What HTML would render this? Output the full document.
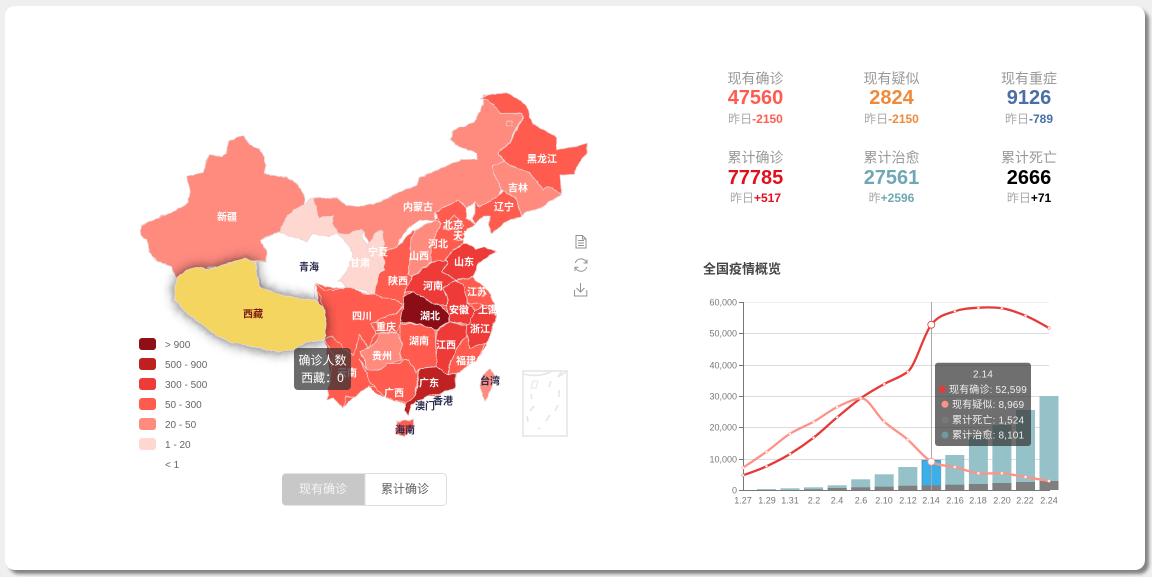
<!DOCTYPE html>
<html>
<head>
<meta charset="utf-8">
<style>
html,body{margin:0;padding:0;width:1152px;height:577px;overflow:hidden;background:#efefef;font-family:"Liberation Sans","Noto Sans CJK SC",sans-serif}
#card{position:absolute;left:5px;top:6px;width:1140px;height:564px;background:#fff;border-radius:10px;box-shadow:4px 4px 3px rgba(0,0,0,.45)}
svg{position:absolute;left:0;top:0}
text{font-family:"Liberation Sans","Noto Sans CJK SC",sans-serif;transform:translateY(1px)}
.A{fill:#ff8a7e}.B{fill:#ff5c4f}.C{fill:#ee3a38}.D{fill:#be2020}.E{fill:#8b1014}.P{fill:#ffd7d1}
.prov polygon{stroke:#e9d5d3;stroke-linejoin:round}
.l text{font-size:10px;font-weight:bold;fill:#fff;text-anchor:middle;dominant-baseline:central;transform:translateY(2px)}
.l text.d{fill:#2d2d50}
.lg{font-size:10px;fill:#666;dominant-baseline:central;transform:translateY(2px)}
.st{text-anchor:middle;dominant-baseline:central}
text.st{transform:translateY(1.7px)}
.lb{font-size:14px;fill:#999}
.n{font-size:20px;font-weight:bold}
.s{font-size:12px;fill:#aaa}
.s tspan{font-weight:bold}
.ty{font-size:9px;fill:#777;text-anchor:end;dominant-baseline:central}
.tx{font-size:9px;fill:#777;text-anchor:middle;dominant-baseline:central}
.tt{font-size:10px;fill:#eee;dominant-baseline:central;letter-spacing:.15px;transform:translateY(2px)}
</style>
</head>
<body>
<div id="card"></div>
<svg width="1152" height="577" viewBox="0 0 1152 577">
<defs>
<filter id="sh" x="-25%" y="-40%" width="150%" height="180%"><feDropShadow dx="0" dy="0" stdDeviation="6" flood-color="#000" flood-opacity=".65"/></filter>
<filter id="rag" filterUnits="userSpaceOnUse" x="100" y="70" width="520" height="390">
<feTurbulence type="fractalNoise" baseFrequency=".14" numOctaves="2" seed="4" result="n"/>
<feDisplacementMap in="SourceGraphic" in2="n" scale="3.5" xChannelSelector="R" yChannelSelector="G" result="d"/>
<feGaussianBlur in="d" stdDeviation=".25"/>
</filter>
</defs>

<!-- MAP -->
<g class="prov" stroke-width=".8" filter="url(#rag)">
<!-- Inner Mongolia -->
<polygon class="A" points="313,198 337,198 347,205 360,207 380,202 403,190 418,185 420,177 437,170 460,160 477,160 477,153 460,147 450,140 453,130 473,123 483,105 483,95 488,96 500,113 522,113 523,118 513,133 510,143 498,152 503,162 492,167 497,180 503,187 497,197 478,207 475,202 467,208 458,200 435,212 435,220 420,220 403,233 397,247 385,255 370,248 362,229 347,235 338,233 332,223 333,216 320,218 315,205"/>
<!-- underlay to close gaps -->
<polygon class="B" style="stroke:none" points="316,284 348,288 375,296 377,280 397,247 415,231 435,220 458,201 467,209 467,218 475,223 464,233 463,243 475,250 478,263 473,277 482,285 494,305 497,317 487,343 477,360 457,373 455,388 433,397 412,397 407,405 380,396 365,385 343,408 333,398 327,400 331,380 325,340"/>
<!-- Gansu -->
<polygon class="P" points="279,232 282,218 290,210 303,205 312,198 315,205 320,218 333,216 332,223 338,233 347,235 362,229 363,240 370,248 385,255 382,262 385,270 380,273 377,280 375,296 365,291 350,287 338,281 340,280 347,270 353,255 350,247 337,233 327,237 312,233 307,242"/>
<!-- Qinghai -->
<polygon fill="#fff" points="279,232 307,242 312,233 327,237 337,233 350,247 353,255 347,270 340,280 338,281 348,287 335,288 325,286 315,283 315,300 290,298 262,288 257,262 266,262 267,252 260,240"/>
<!-- Shaanxi -->
<polygon class="B" points="397,247 413,230 418,230 410,247 412,253 408,275 412,277 405,292 403,305 395,300 375,295 377,280 380,273 385,270 382,253"/>
<!-- Henan -->
<polygon class="C" points="412,277 432,262 445,260 447,263 442,272 457,280 443,288 448,300 447,305 440,305 433,303 413,292 405,292"/>
<!-- Jiangsu -->
<polygon class="B" points="457,280 473,277 482,285 490,293 494,305 485,305 468,303 463,285 455,282"/>
<!-- transformed crop-2 -->
<g transform="translate(360 90) scale(.33333)" stroke-width="2.400">
<polygon class="B" points="390,15 440,8 480,30 500,50 520,105 590,140 590,180 680,160 680,190 650,230 645,250 600,255 605,310 560,290 550,300 510,250 435,220 425,205 415,185 450,160 465,125 490,85 485,70 450,70 420,70 385,30 360,25"/>
<polygon class="A" points="440,95 455,93 457,108 440,108"/>
<polygon class="A" points="395,230 430,215 510,250 550,300 560,290 605,310 600,320 575,330 550,350 500,365 485,378 465,320 430,305 410,270"/>
<polygon class="B" points="345,335 355,350 405,325 430,305 465,320 485,378 440,395 395,430 385,405 390,380 370,380 345,400 335,385 345,365"/>
<polygon class="B" points="225,365 295,330 320,355 320,385 345,400 312,428 310,458 280,480 255,510 215,515 213,470 240,400"/>
<polygon class="B" points="265,395 280,375 300,390 310,410 285,420 250,415"/>
<polygon class="B" points="295,420 315,430 310,450 290,452"/>
<polygon class="A" points="165,420 225,390 240,400 213,470 215,515 155,560 145,555 155,490 150,460"/>
<polygon class="C" points="255,510 280,480 310,460 335,465 345,478 375,470 410,485 355,520 340,560 290,570 245,545 262,520"/>
<polygon class="P" points="45,430 65,420 72,460 65,490 75,520 60,540 55,515 30,500 20,470"/>
</g>
<!-- transformed crop-3 -->
<g transform="translate(300 280) scale(.33333)" stroke-width="2.400">
<polygon class="B" points="45,10 75,30 100,30 145,20 190,40 225,45 285,60 310,75 285,100 250,115 215,130 225,160 205,205 180,165 160,225 130,205 95,165 75,180 78,130 70,80"/>
<polygon class="B" points="75,180 95,165 130,205 160,225 180,165 205,205 180,215 195,240 200,270 205,300 225,320 205,320 165,350 135,350 130,385 100,355 80,360 90,300 100,230"/>
<polygon class="C" points="465,0 490,15 505,70 525,90 505,135 450,125 440,75 445,60 430,25"/>
<polygon class="C" points="525,90 555,75 590,110 560,190 510,205 495,140 505,135"/>
<polygon class="B" points="565,75 585,85 590,105 570,100"/>
<polygon class="B" points="495,140 500,165 510,205 555,190 530,240 470,280 445,285 450,250 470,205 500,165"/>
<polygon class="C" points="410,150 450,125 500,140 500,165 470,205 450,250 445,285 410,270 405,230"/>
<polygon class="B" points="300,135 360,130 405,150 410,260 360,265 350,280 325,240 305,240 300,190"/>
<polygon class="E" points="310,80 310,50 340,35 400,70 420,75 445,100 445,125 405,150 360,130 300,130 290,110"/>
<polygon class="B" points="285,100 310,80 300,130 300,135 290,155 240,157 225,160 215,130 250,115"/>
<polygon class="B" points="180,235 200,270 235,270 265,250 300,250 310,240 325,240 350,280 360,270 350,310 345,345 320,370 250,350 225,320 205,300"/>
<polygon class="A" points="205,205 225,190 240,160 290,157 305,190 300,240 265,250 235,270 200,270 195,240 180,215"/>
<polygon class="D" points="360,265 410,260 445,285 470,280 465,325 420,340 380,350 335,375 325,408 312,390 320,370 345,345 355,300"/>
<polygon class="A" points="570,265 582,285 577,320 555,365 540,320 548,285"/>
<polygon class="B" points="290,425 340,418 342,445 310,472 290,460"/>
</g>
<!-- Xinjiang -->
<g transform="translate(130 90) scale(.33333)" stroke-width="2.400">
<polygon class="A" points="325,140 340,138 360,165 390,178 405,205 408,225 402,250 470,262 505,285 525,322 520,345 490,360 470,385 447,425 390,450 412,485 408,515 370,510 345,508 300,518 265,530 235,530 215,545 170,540 140,565 125,530 85,515 60,490 50,450 30,435 35,405 70,390 100,375 120,370 175,340 180,310 170,260 220,248 235,195 275,200 290,190 295,155"/>
</g>
<!-- Tibet -->
<polygon fill="#f4d55f" stroke="#f2efe0" filter="url(#sh)" points="177,278 187,270 202,267 208,270 218,267 230,263 245,259 256,262 256,272 260,287 280,295 295,298 315,300 323,307 326,323 325,340 320,341 307,342 293,350 277,352 253,347 230,342 213,333 197,320 185,312 175,300 175,285"/>
</g>

<!-- South China Sea box -->
<g fill="none" stroke="#e6e6e6" stroke-width="1.600">
<rect x="523" y="371" width="44" height="65"/>
<path d="M523 374Q540 378 552 371M562 371L558 377L566 372"/>
<path d="M533 381L531 388L536 388L538 381Z" stroke-width="1"/>
<path d="M531 394L532 399M534 406L530 411M527 416L528 422M551 381L549 387M559 390L559 397M558 405L555 411M550 415L546 421M540 428L538 429"/>
</g>

<!-- Map labels -->
<g class="l">
<text x="227" y="216">新疆</text>
<text x="309" y="266" class="d">青海</text>
<text x="253" y="313" style="fill:#7a1a10">西藏</text>
<text x="360" y="262">甘肃</text>
<text x="378" y="251">宁夏</text>
<text x="418" y="206">内蒙古</text>
<text x="542" y="158">黑龙江</text>
<text x="518" y="187">吉林</text>
<text x="504" y="206">辽宁</text>
<text x="453" y="224">北京</text>
<text x="463" y="235">天津</text>
<text x="438" y="243">河北</text>
<text x="419" y="255">山西</text>
<text x="464" y="261">山东</text>
<text x="398" y="280">陕西</text>
<text x="433" y="285">河南</text>
<text x="477" y="291">江苏</text>
<text x="459" y="309">安徽</text>
<text x="488" y="309">上海</text>
<text x="430" y="315">湖北</text>
<text x="362" y="315">四川</text>
<text x="386" y="326">重庆</text>
<text x="480" y="328">浙江</text>
<text x="419" y="340">湖南</text>
<text x="446" y="344">江西</text>
<text x="382" y="355">贵州</text>
<text x="466" y="360">福建</text>
<text x="347" y="372">云南</text>
<text x="429" y="382">广东</text>
<text x="394" y="392">广西</text>
<text x="490" y="380" class="d">台湾</text>
<text x="443" y="400" class="d">香港</text>
<text x="425" y="405" class="d">澳门</text>
<text x="405" y="429" class="d">海南</text>
</g>

<!-- Map tooltip -->
<rect x="294" y="348" width="57" height="42" rx="4" fill="rgba(50,50,50,.72)"/>
<text x="322.500" y="359.500" font-size="12" fill="#fff" text-anchor="middle" dominant-baseline="central">确诊人数</text>
<text x="322.500" y="377" font-size="12" fill="#fff" text-anchor="middle" dominant-baseline="central">西藏：0</text>

<!-- Legend -->
<g>
<rect x="139" y="338" width="17" height="12" rx="3" fill="#8f1014"/>
<rect x="139" y="358" width="17" height="12" rx="3" fill="#be2020"/>
<rect x="139" y="378" width="17" height="12" rx="3" fill="#ee3a38"/>
<rect x="139" y="398" width="17" height="12" rx="3" fill="#ff5c4f"/>
<rect x="139" y="418" width="17" height="12" rx="3" fill="#ff8a7e"/>
<rect x="139" y="438" width="17" height="12" rx="3" fill="#ffd7d1"/>
<text class="lg" x="165" y="343.500">&gt; 900</text>
<text class="lg" x="165" y="363.500">500 - 900</text>
<text class="lg" x="165" y="383.500">300 - 500</text>
<text class="lg" x="165" y="403.500">50 - 300</text>
<text class="lg" x="165" y="423.500">20 - 50</text>
<text class="lg" x="165" y="443.500">1 - 20</text>
<text class="lg" x="165" y="463.500">&lt; 1</text>
</g>

<!-- Toggle buttons -->
<path d="M286 473.500H365V505.500H286a4 4 0 0 1-4-4V477.500a4 4 0 0 1 4-4Z" fill="#c8c8c8"/>
<path d="M365 473.500H442.500a4 4 0 0 1 4 4V501.500a4 4 0 0 1-4 4H365Z" fill="#fff" stroke="#dcdfe6"/>
<text x="323" y="488" font-size="12" fill="#f4f4f4" text-anchor="middle" dominant-baseline="central">现有确诊</text>
<text x="405" y="488" font-size="12" fill="#606266" text-anchor="middle" dominant-baseline="central">累计确诊</text>

<!-- Toolbox icons -->
<g fill="none" stroke="#929292" stroke-width="1">
<path d="M576 235.500H582.500L586 239V248H576Z"/>
<path d="M582.500 235.500V239H586M578 240.500H584M578 243H584M578 245.500H584"/>
<path d="M575.300 263A6 6 0 0 1 586.500 262.500M586.800 267A6 6 0 0 1 575.500 267.500"/>
<path d="M587 259.500V263H583.500M575 271V267.200H578.500"/>
<path d="M580.500 283V292M576.500 288L580.500 292L584.500 288M574.500 290V296H586.800V290" />
</g>

<!-- Stats -->
<g class="st">
<text class="st lb" x="755.500" y="77">现有确诊</text>
<text class="st lb" x="891.500" y="77">现有疑似</text>
<text class="st lb" x="1029" y="77">现有重症</text>
<text class="st n" x="755.500" y="96.500" fill="#ff5c50">47560</text>
<text class="st n" x="891.500" y="96.500" fill="#ee8a3c">2824</text>
<text class="st n" x="1029" y="96.500" fill="#4a6fa5">9126</text>
<text class="st s" x="755.500" y="117.500">昨日<tspan fill="#ff5c50">-2150</tspan></text>
<text class="st s" x="891.500" y="117.500">昨日<tspan fill="#ee8a3c">-2150</tspan></text>
<text class="st s" x="1029" y="117.500">昨日<tspan fill="#4a6fa5">-789</tspan></text>
<text class="st lb" x="755.500" y="156">累计确诊</text>
<text class="st lb" x="891.500" y="156">累计治愈</text>
<text class="st lb" x="1029" y="156">累计死亡</text>
<text class="st n" x="755.500" y="176.500" fill="#e0101c">77785</text>
<text class="st n" x="891.500" y="176.500" fill="#6fa8b2">27561</text>
<text class="st n" x="1029" y="176.500" fill="#000">2666</text>
<text class="st s" x="755.500" y="196.500">昨日<tspan fill="#e0101c">+517</tspan></text>
<text class="st s" x="891.500" y="196.500">昨<tspan fill="#6fa8b2">+2596</tspan></text>
<text class="st s" x="1029" y="196.500">昨日<tspan fill="#000">+71</tspan></text>
</g>

<!-- Chart -->
<text x="703" y="268" font-size="13" font-weight="bold" fill="#464646" dominant-baseline="central">全国疫情概览</text>
<g stroke="#dcdcdc" stroke-width="1">
<path d="M743 302.500H1049" stroke="#eee"/>
<path d="M743 333.500H1049M743 365.500H1049M743 396.500H1049M743 427.500H1049M743 459.500H1049"/>
</g>
<g font-size="9">
<text class="ty" x="737" y="301.500">60,000</text>
<text class="ty" x="737" y="332.500">50,000</text>
<text class="ty" x="737" y="364.500">40,000</text>
<text class="ty" x="737" y="395.500">30,000</text>
<text class="ty" x="737" y="426.500">20,000</text>
<text class="ty" x="737" y="458.500">10,000</text>
<text class="ty" x="737" y="489.500">0</text>
<text class="tx" x="743" y="499.500">1.27</text>
<text class="tx" x="767" y="499.500">1.29</text>
<text class="tx" x="790" y="499.500">1.31</text>
<text class="tx" x="814" y="499.500">2.2</text>
<text class="tx" x="837" y="499.500">2.4</text>
<text class="tx" x="861" y="499.500">2.6</text>
<text class="tx" x="884" y="499.500">2.10</text>
<text class="tx" x="908" y="499.500">2.12</text>
<text class="tx" x="931" y="499.500">2.14</text>
<text class="tx" x="955" y="499.500">2.16</text>
<text class="tx" x="978" y="499.500">2.18</text>
<text class="tx" x="1002" y="499.500">2.20</text>
<text class="tx" x="1025" y="499.500">2.22</text>
<text class="tx" x="1049" y="499.500">2.24</text>
</g>
<!-- Bars -->
<g fill="#94c2c8">
<rect x="757" y="489" width="19" height="1"/>
<rect x="780.500" y="488.300" width="19" height="1.700"/>
<rect x="804" y="487.300" width="19" height="2.700"/>
<rect x="827.700" y="485.300" width="19" height="4.700"/>
<rect x="851.200" y="479.300" width="19" height="10.700"/>
<rect x="874.700" y="474.300" width="19" height="15.700"/>
<rect x="898.300" y="467" width="19" height="23"/>
<rect x="945.300" y="455" width="19" height="35"/>
<rect x="968.900" y="437" width="19" height="53"/>
<rect x="992.400" y="425" width="19" height="65"/>
<rect x="1016" y="410" width="19" height="80"/>
<rect x="1039.500" y="396" width="19" height="94"/>
</g>
<rect x="921.800" y="460" width="19" height="30" fill="#3caee8" stroke="rgba(0,0,0,.12)" stroke-width="1.500"/>
<g fill="#7f7f7f">
<rect x="804" y="489.300" width="19" height=".7"/>
<rect x="827.700" y="488" width="19" height="2"/>
<rect x="851.200" y="487.300" width="19" height="2.700"/>
<rect x="874.700" y="486.700" width="19" height="3.300"/>
<rect x="898.300" y="485.700" width="19" height="4.300"/>
<rect x="921.800" y="485.300" width="19" height="4.700"/>
<rect x="945.300" y="484.700" width="19" height="5.300"/>
<rect x="968.900" y="484" width="19" height="6"/>
<rect x="992.400" y="483" width="19" height="7"/>
<rect x="1016" y="482" width="19" height="8"/>
<rect x="1039.500" y="481" width="19" height="9"/>
</g>
<!-- Axes -->
<path d="M743.500 302V490M739 302.500H743M739 333.500H743M739 365.500H743M739 396.500H743M739 427.500H743M739 459.500H743" stroke="#777" fill="none"/>
<path d="M739 490.500H1050" stroke="#777" fill="none"/>
<!-- Cross line -->
<path d="M931.500 302V490" stroke="#aaa" fill="none"/>
<!-- Lines -->
<path d="M743 475.300C750.850 472.500 758.700 469.900 766.500 466.300S782.200 458.800 790 454S805.700 443.800 813.600 437.700S829.300 423.900 837.200 417.300S852.900 403.900 860.700 398.300S876.400 388.400 884.200 384S900 377.700 907.800 371.700S923.500 334.700 931.300 324.700S947 314.100 954.800 311.300S970.500 308.200 978.400 307.700S994 307 1001.900 308.300S1017.600 312.400 1025.500 315.700S1041 323.500 1049 328" fill="none" stroke="#e53a3a" stroke-width="2.300"/>
<path d="M743 467.700C750.850 462.500 758.700 457.400 766.500 451.700S782.200 438.700 790 433.700S805.700 426.100 813.600 421.700S829.300 410.900 837.200 407S852.900 399.300 860.700 398.300S876.400 414.800 884.200 421.700S900 433 907.800 439.700S923.500 457.200 931.300 461.700S947 465.100 954.800 467S970.500 472.300 978.400 473.300S994 472.700 1001.900 473.300S1017.600 475.700 1025.500 477S1041 479.700 1049 481" fill="none" stroke="#ff9288" stroke-width="2.300"/>
<g fill="#fff" stroke="#f08080" stroke-width=".6">
<circle cx="743" cy="475.300" r="1.300"/><circle cx="766.500" cy="466.300" r="1.300"/><circle cx="790" cy="454" r="1.300"/><circle cx="813.600" cy="437.700" r="1.300"/><circle cx="837.200" cy="417.300" r="1.300"/><circle cx="884.200" cy="384" r="1.300"/><circle cx="907.800" cy="371.700" r="1.300"/><circle cx="954.800" cy="311.300" r="1.300"/><circle cx="978.400" cy="307.700" r="1.300"/><circle cx="1001.900" cy="308.300" r="1.300"/><circle cx="1025.500" cy="315.700" r="1.300"/><circle cx="1049" cy="328" r="1.300"/>
</g>
<circle cx="931.300" cy="324.700" r="3.500" fill="#fff" stroke="#e53a3a" stroke-width=".8"/>
<g fill="#fff" stroke="#ffb0a8" stroke-width=".6">
<circle cx="743" cy="467.700" r="1.300"/><circle cx="766.500" cy="451.700" r="1.300"/><circle cx="790" cy="433.700" r="1.300"/><circle cx="813.600" cy="421.700" r="1.300"/><circle cx="837.200" cy="407" r="1.300"/><circle cx="860.700" cy="398.300" r="1.300"/><circle cx="884.200" cy="421.700" r="1.300"/><circle cx="907.800" cy="439.700" r="1.300"/><circle cx="954.800" cy="467" r="1.300"/><circle cx="978.400" cy="473.300" r="1.300"/><circle cx="1001.900" cy="473.300" r="1.300"/><circle cx="1025.500" cy="477" r="1.300"/><circle cx="1049" cy="481" r="1.300"/>
</g>
<circle cx="931.300" cy="461.700" r="3.500" fill="#fff" stroke="#ff9288" stroke-width=".8"/>
<!-- Chart tooltip -->
<rect x="935" y="362.700" width="96" height="83.300" rx="3" fill="rgba(50,50,50,.7)"/>
<text class="tt" x="983" y="373" text-anchor="middle" font-size="10.500">2.14</text>
<circle cx="942.300" cy="389.300" r="3.500" fill="#e53a3a"/>
<circle cx="945" cy="404.300" r="3.500" fill="#ff9288"/>
<circle cx="945" cy="420" r="3.500" fill="#787878"/>
<circle cx="945" cy="435" r="3.500" fill="#6a9ba0"/>
<text class="tt" x="949" y="388.300">现有确诊: 52,599</text>
<text class="tt" x="952" y="403.300">现有疑似: 8,969</text>
<text class="tt" x="952" y="419">累计死亡: 1,524</text>
<text class="tt" x="952" y="434">累计治愈: 8,101</text>
</svg>
</body>
</html>
